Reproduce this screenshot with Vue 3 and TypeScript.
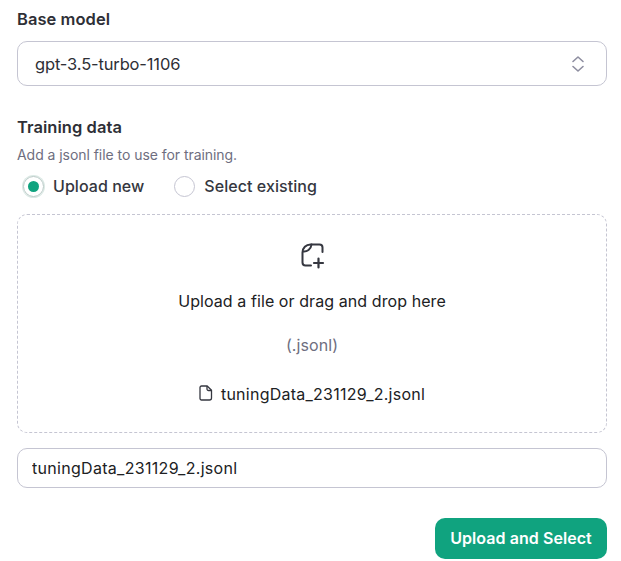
<script setup lang="ts">
const fileName = 'tuningData_231129_2.jsonl'
</script>

<template>
  <div class="form">
    <label class="label">Base model</label>
    <div class="select">
      <span>gpt-3.5-turbo-1106</span>
      <svg class="chev" width="16" height="20" viewBox="0 0 16 20" fill="none" stroke="#8e8ea0" stroke-width="1.6" stroke-linecap="round" stroke-linejoin="round">
        <path d="M3 7.5 8 3l5 4.5" />
        <path d="M3 12.5 8 17l5-4.5" />
      </svg>
    </div>

    <label class="label second">Training data</label>
    <p class="help">Add a jsonl file to use for training.</p>
    <div class="radios">
      <div class="radio-item">
        <span class="radio on"><span class="dot"></span></span>
        <span>Upload new</span>
      </div>
      <div class="radio-item">
        <span class="radio"></span>
        <span>Select existing</span>
      </div>
    </div>

    <div class="drop">
      <svg class="up" width="26" height="26" viewBox="0 0 26 26" fill="none" stroke="#353740" stroke-width="2" stroke-linecap="round" stroke-linejoin="round">
        <path d="M12 22.5H6.500a3 3 0 0 1-3-3V9.500C3.500 5 7 1.500 11.500 1.500h9a3 3 0 0 1 3 3V9" />
        <path d="M4 8.500c4 .5 8-2 8.500-7" />
        <path d="M19.500 15.500v9M15 20h9" stroke-width="2.200" />
      </svg>
      <div class="drop-title">Upload a file or drag and drop here</div>
      <div class="ext">(.jsonl)</div>
      <div class="file">
        <svg class="file-icon" width="14" height="16" viewBox="0 0 14 16" fill="none" stroke="#353740" stroke-width="1.300" stroke-linejoin="round">
          <path d="M2.500 1h5.700L12.500 5.300V13a2 2 0 0 1-2 2h-8a1.500 1.500 0 0 1-1.500-1.500v-11A1.500 1.500 0 0 1 2.500 1Z" />
          <path d="M8 1v3a1.500 1.500 0 0 0 1.500 1.500h3" />
        </svg>
        <span>{{ fileName }}</span>
      </div>
    </div>

    <input class="name" type="text" :value="fileName" />

    <div class="actions">
      <button class="primary" type="button">Upload and Select</button>
    </div>
  </div>
</template>

<style>
html, body { background: #fff; }
</style>

<style scoped>
.form {
  width: 590px;
  margin-left: 17px;
  padding-top: 9px;
  font-family: Inter, "Liberation Sans", sans-serif;
  color: #202123;
  display: flex;
  flex-direction: column;
}
.label {
  font-size: 16.5px;
  line-height: 20px;
  font-weight: 600;
  letter-spacing: 0.05px;
  color: #2e2f36;
}
.second { margin-top: 31px; }
.select {
  margin-top: 12px;
  height: 45px;
  box-sizing: border-box;
  border: 1px solid #c5c5d2;
  border-radius: 10px;
  display: flex;
  align-items: center;
  justify-content: space-between;
  padding: 0 20px 0 17px;
  font-size: 16.5px;
  letter-spacing: -0.15px;
  color: #2e2f36;
}
.help {
  margin: 9px 0 0;
  font-size: 14px;
  line-height: 18px;
  color: #6e6e80;
  letter-spacing: -0.05px;
}
.radios {
  display: flex;
  gap: 30px;
  margin-top: 7px;
  padding-left: 6px;
  height: 30px;
  align-items: center;
  font-size: 16px;
  font-weight: 500;
  letter-spacing: 0.05px;
  color: #353740;
}
.radio-item {
  display: flex;
  align-items: center;
  gap: 9px;
}
.radio {
  width: 21px;
  height: 21px;
  box-sizing: border-box;
  border: 1px solid #c5c5d2;
  border-radius: 50%;
  display: flex;
  align-items: center;
  justify-content: center;
  flex-shrink: 0;
}
.radio.on { box-shadow: 0 0 0 1px #dbe9e5; border-color: #b9c9c6; }
.dot {
  width: 11px;
  height: 11px;
  border-radius: 50%;
  background: #10a37f;
}
.drop {
  margin-top: 13px;
  height: 219px;
  box-sizing: border-box;
  border: 1px dashed #c5c5d2;
  border-radius: 10px;
  display: flex;
  flex-direction: column;
  align-items: center;
  padding-top: 28px;
}
.drop-title {
  margin-top: 22px;
  font-size: 16px;
  line-height: 20px;
  letter-spacing: 0.08px;
  color: #202123;
}
.ext {
  margin-top: 24px;
  font-size: 16px;
  line-height: 20px;
  letter-spacing: 0.08px;
  color: #6e6e80;
}
.file {
  margin-top: 29px;
  display: flex;
  align-items: center;
  gap: 8px;
  font-size: 16px;
  line-height: 20px;
  letter-spacing: 0.25px;
  color: #202123;
}
.file-icon { margin-top: -3px; }
.name {
  margin-top: 15px;
  height: 40px;
  box-sizing: border-box;
  width: 100%;
  border: 1px solid #c5c5d2;
  border-radius: 10px;
  padding: 0 14px;
  font: inherit;
  font-size: 16px;
  letter-spacing: 0.3px;
  color: #202123;
  background: #fff;
  outline: none;
}
.actions {
  margin-top: 30px;
  display: flex;
  justify-content: flex-end;
}
.primary {
  width: 172px;
  height: 41px;
  padding: 0 0 2px;
  border: 0;
  border-radius: 10px;
  background: #10a37f;
  color: #fff;
  font: inherit;
  font-size: 16px;
  font-weight: 600;
  letter-spacing: 0.06px;
}
</style>
